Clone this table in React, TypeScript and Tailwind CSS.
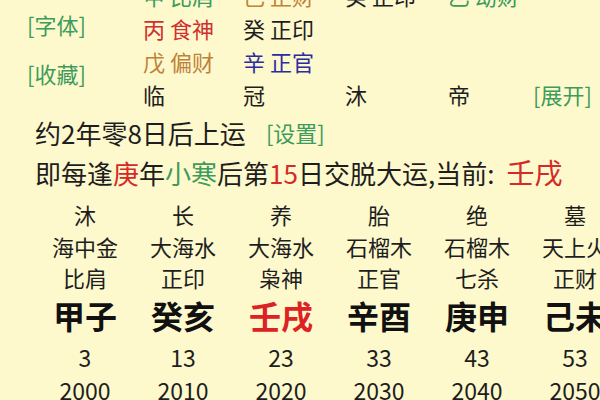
const font = { fontFamily: '"Noto Sans CJK SC", "Noto Sans", sans-serif' };

const hidden = [
  [
    { t: "甲 比肩", c: "text-[#3d9b5c]" },
    { t: "己 正财", c: "text-[#c0823a]" },
    { t: "癸 正印", c: "text-[#1e1e1e]" },
    { t: "乙 劫财", c: "text-[#3d9b5c]" },
  ],
  [
    { t: "丙 食神", c: "text-[#cf3030]" },
    { t: "癸 正印", c: "text-[#1e1e1e]" },
    { t: "", c: "" },
    { t: "", c: "" },
  ],
  [
    { t: "戊 偏财", c: "text-[#c0823a]" },
    { t: "辛 正官", c: "text-[#2c2ca0]" },
    { t: "", c: "" },
    { t: "", c: "" },
  ],
  [
    { t: "临", c: "text-[#1e1e1e]" },
    { t: "冠", c: "text-[#1e1e1e]" },
    { t: "沐", c: "text-[#1e1e1e]" },
    { t: "帝", c: "text-[#1e1e1e]" },
  ],
];

const dayun = [
  { s: "沐", n: "海中金", g: "比肩", p: "甲子", a: "3", y: "2000" },
  { s: "长", n: "大海水", g: "正印", p: "癸亥", a: "13", y: "2010" },
  { s: "养", n: "大海水", g: "枭神", p: "壬戌", a: "23", y: "2020", cur: true },
  { s: "胎", n: "石榴木", g: "正官", p: "辛酉", a: "33", y: "2030" },
  { s: "绝", n: "石榴木", g: "七杀", p: "庚申", a: "43", y: "2040" },
  { s: "墓", n: "天上火", g: "正财", p: "己未", a: "53", y: "2050" },
];

export default function App() {
  return (
    <div
      className="w-[600px] h-[400px] overflow-hidden bg-[#fdf9cd] text-[#1e1e1e]"
      style={font}
    >
      {/* hidden stems */}
      <div className="flex h-[112px]">
        <div className="w-[143px] pl-[27px] pt-[8px] flex flex-col gap-[16px] text-[22px] text-[#3d9b5c]">
          <div className="h-[33px] leading-[33px]">[字体]</div>
          <div className="h-[33px] leading-[33px]">[收藏]</div>
        </div>
        <div className="-mt-[21px] flex flex-col text-[22px]">
          {hidden.map((row, i) => (
            <div
              key={i}
              className="h-[33px] grid grid-cols-[100px_102px_103px_85px_auto] items-center"
            >
              {row.map((c, j) => (
                <div key={j} className={c.c + " whitespace-nowrap"}>
                  {c.t}
                </div>
              ))}
              {i === 3 && <div className="text-[22px] text-[#3d9b5c]">[展开]</div>}
            </div>
          ))}
        </div>
      </div>

      {/* start info */}
      <div className="pl-[35px] h-[40px] flex items-center text-[26px] whitespace-nowrap">
        约2年零8日后上运
        <span className="ml-[20px] text-[22px] text-[#3d9b5c]">[设置]</span>
      </div>
      <div className="pl-[35px] h-[40px] flex items-center text-[26px] whitespace-nowrap">
        即每逢<span className="text-[#d42a2a]">庚</span>年
        <span className="text-[#3d9b5c]">小寒</span>后第
        <span className="text-[#d42a2a]">15</span>日交脱大运,当前:
        <span className="ml-[12px] text-[28px] text-[#d42a2a]">壬戌</span>
      </div>

      {/* dayun grid */}
      <div className="pt-[6px] pl-[36px] grid grid-cols-[repeat(6,98px)] text-center whitespace-nowrap">
        {dayun.map((d) => (
          <div key={d.y} className="flex flex-col items-center">
            <div className="h-[32px] leading-[32px] text-[22px]">{d.s}</div>
            <div className="h-[32px] leading-[32px] text-[22px]">{d.n}</div>
            <div className="h-[31px] leading-[31px] text-[22px]">{d.g}</div>
            <div
              className={
                "h-[44px] leading-[44px] text-[32px] font-bold " +
                (d.cur ? "text-[#dc2222]" : "text-[#111111]")
              }
            >
              {d.p}
            </div>
            <div className="h-[40px] leading-[40px] text-[23px]">{d.a}</div>
            <div className="h-[26px] leading-[26px] text-[23px]">{d.y}</div>
          </div>
        ))}
      </div>
    </div>
  );
}
